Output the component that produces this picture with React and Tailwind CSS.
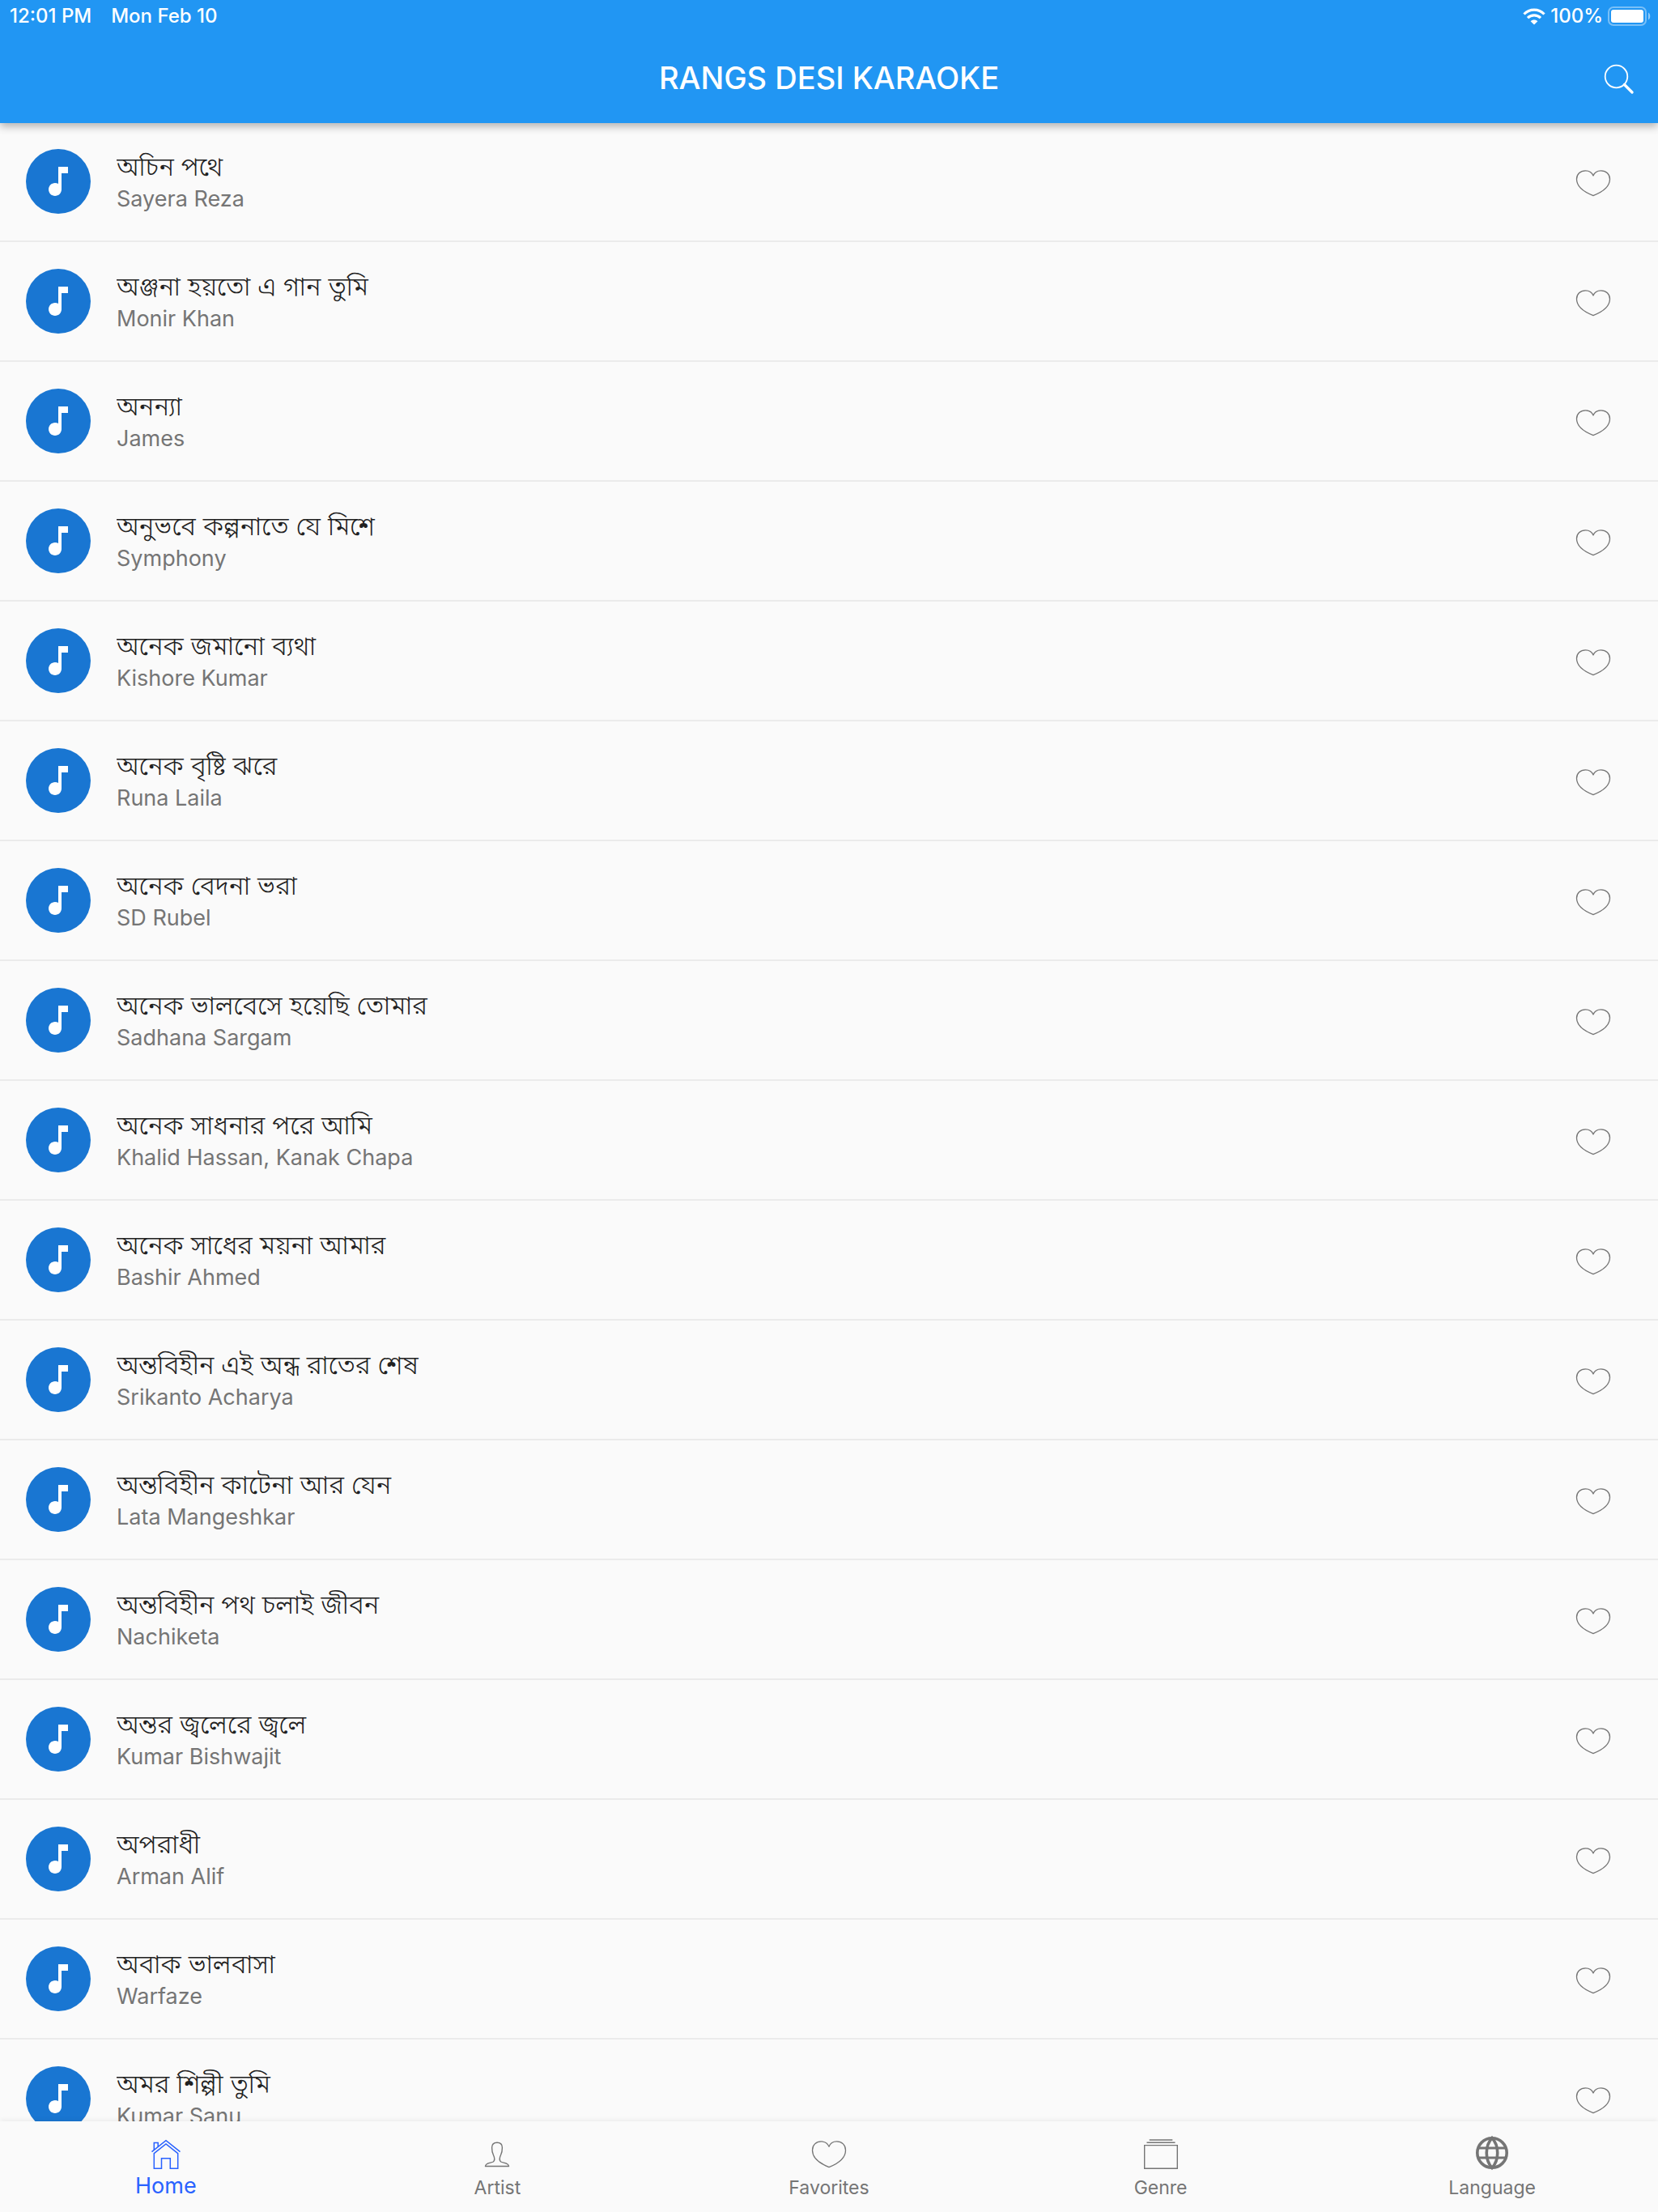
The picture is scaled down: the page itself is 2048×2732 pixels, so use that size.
const SONGS = [
  ["অচিন পথে", "Sayera Reza"],
  ["অঞ্জনা হয়তো এ গান তুমি", "Monir Khan"],
  ["অনন্যা", "James"],
  ["অনুভবে কল্পনাতে যে মিশে", "Symphony"],
  ["অনেক জমানো ব্যথা", "Kishore Kumar"],
  ["অনেক বৃষ্টি ঝরে", "Runa Laila"],
  ["অনেক বেদনা ভরা", "SD Rubel"],
  ["অনেক ভালবেসে হয়েছি তোমার", "Sadhana Sargam"],
  ["অনেক সাধনার পরে আমি", "Khalid Hassan, Kanak Chapa"],
  ["অনেক সাধের ময়না আমার", "Bashir Ahmed"],
  ["অন্তবিহীন এই অন্ধ রাতের শেষ", "Srikanto Acharya"],
  ["অন্তবিহীন কাটেনা আর যেন", "Lata Mangeshkar"],
  ["অন্তবিহীন পথ চলাই জীবন", "Nachiketa"],
  ["অন্তর জ্বলেরে জ্বলে", "Kumar Bishwajit"],
  ["অপরাধী", "Arman Alif"],
  ["অবাক ভালবাসা", "Warfaze"],
  ["অমর শিল্পী তুমি", "Kumar Sanu"],
];

function HeartIcon({ className }) {
  return (
    <svg viewBox="0 0 44 36" fill="none" stroke="currentColor" strokeWidth="1.3" strokeLinejoin="round" preserveAspectRatio="none" className={className} aria-hidden="true">
      <path d="M22 8.500C20.500 4.500 17 2 12.500 2C6 2 1.500 6.500 1.500 13C1.500 22.500 11 30 22 34.500C33 30 42.500 22.500 42.500 13C42.500 6.500 38 2 31.500 2C27 2 23.500 4.500 22 8.500Z" />
    </svg>
  );
}

function NoteIcon() {
  return (
    <svg viewBox="0 0 24 24" fill="currentColor" className="size-12" aria-hidden="true">
      <path d="M12 3v10.550c-.590-.340-1.270-.550-2-.550-2.210 0-4 1.790-4 4s1.790 4 4 4 4-1.790 4-4V7h4V3h-6z" />
    </svg>
  );
}

function SearchIcon() {
  return (
    <svg viewBox="0 0 38 38" fill="none" stroke="currentColor" strokeLinecap="round" className="size-[38px]" aria-hidden="true">
      <circle cx="15.500" cy="15.500" r="13.800" strokeWidth="1.800" />
      <path d="M25.500 25.500L35 35" strokeWidth="3.400" />
    </svg>
  );
}

function WifiIcon() {
  return (
    <svg viewBox="0 0 28 21" fill="none" stroke="currentColor" strokeWidth="3.200" className="h-[21px] w-7" aria-hidden="true">
      <path d="M1.500 7.500C8.500 .400 19.500 .400 26.500 7.500" />
      <path d="M6 12.200C10.500 7.800 17.500 7.800 22 12.200" />
      <path d="M14 20.500L9.600 16.200C12 14 16 14 18.400 16.200Z" fill="currentColor" stroke="none" />
    </svg>
  );
}

function BatteryIcon() {
  return (
    <svg viewBox="0 0 54 24" fill="currentColor" className="h-6 w-[54px]" aria-hidden="true">
      <rect x="1" y="1" width="46" height="22" rx="6" fill="none" stroke="currentColor" strokeWidth="2" opacity=".4" />
      <rect x="4" y="4" width="40" height="16" rx="3" />
      <path d="M50 7.500c3 1.500 3 7.500 0 9z" opacity=".5" />
    </svg>
  );
}

function HomeIcon() {
  return (
    <svg viewBox="0 0 44 44" fill="none" stroke="currentColor" strokeWidth="1.500" className="size-11" aria-hidden="true">
      <path d="M4.500 19.700L22 5.700L39.500 19.700" />
      <path d="M7.300 21.700L22 10L36.700 21.700V40.300H27.300V27.700H16.500V40.300H7.300Z" />
      <path d="M7.300 17.500V8.500H12.200V13.500" />
    </svg>
  );
}

function PersonIcon() {
  return (
    <svg viewBox="0 0 44 44" fill="none" stroke="currentColor" strokeWidth="1.400" strokeLinejoin="round" className="size-11" aria-hidden="true">
      <path d="M22 8.300C17.500 8.300 15.600 11 15.600 14.500C15.600 19 16.300 21.500 17.400 23.500C19 26.800 19.200 30.500 17.200 32C14.500 33.600 7.800 33 7.500 37.500H36.500C36.200 33 29.500 33.600 26.800 32C24.800 30.500 25 26.800 26.600 23.500C27.700 21.500 28.400 19 28.400 14.500C28.400 11 26.500 8.300 22 8.300Z" />
    </svg>
  );
}

function AlbumsIcon() {
  return (
    <svg viewBox="0 0 44 44" fill="none" stroke="currentColor" strokeWidth="1.400" className="size-11" aria-hidden="true">
      <path d="M7.700 5H36.300M4.500 8.300H39.500M1.700 11.600H42.300V40.300H1.700Z" />
    </svg>
  );
}

function GlobeIcon() {
  return (
    <svg viewBox="0 0 48 48" fill="none" stroke="currentColor" strokeWidth="3.600" className="size-12" aria-hidden="true">
      <circle cx="24" cy="23" r="18.200" />
      <path d="M24 4.500C15 14.500 15 31.500 24 41.500C33 31.500 33 14.500 24 4.500Z" />
      <path d="M7 17H41M7 29H41" strokeWidth="3.200" />
    </svg>
  );
}

const TABS = [
  { label: "Home", icon: <HomeIcon />, active: true },
  { label: "Artist", icon: <PersonIcon /> },
  { label: "Favorites", icon: <HeartIcon className="h-[35px] w-11" /> },
  { label: "Genre", icon: <AlbumsIcon /> },
  { label: "Language", icon: <GlobeIcon /> },
];

function StatusBar() {
  return (
    <div className="flex h-10 items-center justify-between pr-2 pl-3 text-[24px] font-medium">
      <div className="flex gap-6">
        <span>12:01 PM</span>
        <span>Mon Feb 10</span>
      </div>
      <div className="flex items-center gap-1.5">
        <WifiIcon />
        <span>100%</span>
        <BatteryIcon />
      </div>
    </div>
  );
}

function SongRow({ title, artist }) {
  return (
    <li className="flex h-[148px] shrink-0 items-center border-b-2 border-[#ebebeb] pr-[58px] pl-8">
      <span className="flex size-20 shrink-0 items-center justify-center rounded-full bg-[#1976d2] text-white">
        <NoteIcon />
      </span>
      <div className="ml-8 min-w-0 grow pt-1">
        <h2 className="truncate text-[32px] leading-10 font-light text-[#212121]">{title}</h2>
        <p className="text-[27px] leading-10 text-[#757575]">{artist}</p>
      </div>
      <button type="button" aria-label={`Add ${title} to favorites`} className="pt-1 text-[#757575]">
        <HeartIcon className="h-[34px] w-11" />
      </button>
    </li>
  );
}

export default function App() {
  return (
    <div className="flex h-screen flex-col overflow-hidden bg-[#fafafa] font-['Inter','Noto_Sans_Bengali','Noto_Sans',sans-serif]">
      <header className="relative z-10 shrink-0 bg-[#2196f3] text-white shadow-[0_4px_10px_rgba(0,0,0,0.3)]">
        <StatusBar />
        <div className="grid h-28 grid-cols-[1fr_auto_1fr] items-center px-[29px]">
          <h1 className="col-start-2 text-[38px] font-medium">RANGS DESI KARAOKE</h1>
          <button type="button" aria-label="Search" className="justify-self-end pt-1">
            <SearchIcon />
          </button>
        </div>
      </header>
      <main className="-mt-px min-h-0 grow overflow-hidden">
        <ul className="flex flex-col">
          {SONGS.map(([title, artist]) => (
            <SongRow key={title} title={title} artist={artist} />
          ))}
        </ul>
      </main>
      <nav className="relative z-10 grid h-28 shrink-0 grid-cols-5 bg-[#fafafa] shadow-[0_-2px_6px_rgba(0,0,0,0.06)]">
        {TABS.map(({ label, icon, active }) => (
          <button
            key={label}
            type="button"
            aria-current={active ? "page" : undefined}
            className={
              active
                ? "flex flex-col items-center pt-4 text-[27px] leading-8 text-[#2962ff]"
                : "flex flex-col items-center pt-4 text-[23px] leading-9 text-[#757575]"
            }
          >
            <span className="flex h-12 items-center">{icon}</span>
            <span>{label}</span>
          </button>
        ))}
      </nav>
    </div>
  );
}
